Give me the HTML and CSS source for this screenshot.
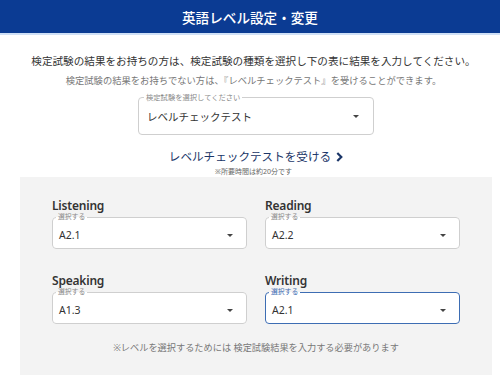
FILE: index.html
```html
<!DOCTYPE html>
<html lang="ja">
<head>
  <meta charset="UTF-8">
  <title>英語レベル設定・変更</title>
  <link rel="stylesheet" href="styles.css">
</head>
<body>
  <header class="top-bar">
    <h1>英語レベル設定・変更</h1>
  </header>

  <section class="intro">
    <p class="lead">検定試験の結果をお持ちの方は、検定試験の種類を選択し下の表に結果を入力してください。</p>
    <p class="sub">検定試験の結果をお持ちでない方は、『レベルチェックテスト』を受けることができます。</p>

    <fieldset class="field field-exam">
      <legend>検定試験を選択してください</legend>
      <div class="value">
        <span>レベルチェックテスト</span>
        <svg class="caret" width="6" height="3" viewBox="0 0 6 3"><path d="M0 0h6L3 3z" fill="#444"/></svg>
      </div>
    </fieldset>

    <a class="test-link" href="#">レベルチェックテストを受ける
      <svg width="7" height="10" viewBox="0 0 7 10"><path d="M1.3 1l4 4-4 4" fill="none" stroke="#1b3668" stroke-width="2.2"/></svg>
    </a>
    <p class="time-note">※所要時間は約20分です</p>
  </section>

  <section class="levels">
    <div class="level-grid">
      <div class="level">
        <h3>Listening</h3>
        <fieldset class="field">
          <legend>選択する</legend>
          <div class="value">
            <span>A2.1</span>
            <svg class="caret" width="6" height="3" viewBox="0 0 6 3"><path d="M0 0h6L3 3z" fill="#444"/></svg>
          </div>
        </fieldset>
      </div>
      <div class="level">
        <h3>Reading</h3>
        <fieldset class="field">
          <legend>選択する</legend>
          <div class="value">
            <span>A2.2</span>
            <svg class="caret" width="6" height="3" viewBox="0 0 6 3"><path d="M0 0h6L3 3z" fill="#444"/></svg>
          </div>
        </fieldset>
      </div>
      <div class="level">
        <h3>Speaking</h3>
        <fieldset class="field">
          <legend>選択する</legend>
          <div class="value">
            <span>A1.3</span>
            <svg class="caret" width="6" height="3" viewBox="0 0 6 3"><path d="M0 0h6L3 3z" fill="#444"/></svg>
          </div>
        </fieldset>
      </div>
      <div class="level">
        <h3>Writing</h3>
        <fieldset class="field focused">
          <legend>選択する</legend>
          <div class="value">
            <span>A2.1</span>
            <svg class="caret" width="6" height="3" viewBox="0 0 6 3"><path d="M0 0h6L3 3z" fill="#444"/></svg>
          </div>
        </fieldset>
      </div>
    </div>
    <p class="levels-note">※レベルを選択するためには 検定試験結果を入力する必要があります</p>
  </section>
</body>
</html>
```

FILE: styles.css
```css
body {
  margin: 0;
  font-family: "Noto Sans", "Noto Sans CJK JP", sans-serif;
  color: #333;
  background: #fff;
}

.top-bar {
  background: #0b3b93;
  height: 33px;
  border-bottom: 2px solid #cfe0f6;
  display: flex;
  align-items: center;
  justify-content: center;
}

.top-bar h1 {
  margin: 0;
  color: #fff;
  font-size: 13.6px;
  font-weight: 500;
}

.intro {
  text-align: center;
  padding: 19px 0 0 7px;
}

.intro p {
  margin: 0;
}

.lead {
  font-size: 10.6px;
  line-height: 14px;
  color: #333;
}

.sub {
  margin-top: 7px !important;
  font-size: 9.3px;
  line-height: 12px;
  color: #777;
}

.field {
  margin: 0;
  border: 1px solid #cfcfcf;
  border-radius: 4px;
  background: #fff;
  text-align: left;
  padding: 7.5px 13px 6.5px 6px;
}

.field legend {
  margin-left: -3px;
  padding: 0 2px;
  font-size: 6.8px;
  line-height: 8px;
  color: #8a8a8a;
}

.field .value {
  display: flex;
  align-items: center;
  justify-content: space-between;
  font-size: 10.5px;
  line-height: 13px;
  color: #333;
}

.field-exam {
  width: 236px;
  box-sizing: border-box;
  margin: 6px 0 0 131px;
  padding: 7.5px 14px 10px 8px;
}

.field-exam legend {
  font-size: 7.3px;
  line-height: 9px;
}

.field-exam .value {
  font-size: 10.5px;
  line-height: 14px;
}

.test-link {
  display: inline-flex;
  align-items: center;
  gap: 5px;
  margin-top: 15px;
  margin-left: 5px;
  font-size: 11.6px;
  line-height: 14px;
  color: #1b3668;
  text-decoration: none;
}

.time-note {
  font-size: 7px;
  line-height: 9px;
  color: #666;
  margin-top: 1px !important;
}

.levels {
  background: #f3f3f3;
  margin: 1.5px 8px 0 20px;
  padding: 22px 32px 21px;
}

.level-grid {
  display: grid;
  grid-template-columns: 195px 195px;
  column-gap: 18px;
  row-gap: 25px;
}

.level h3 {
  margin: 0 0 1px;
  font-size: 12px;
  line-height: 13px;
  font-weight: 600;
  letter-spacing: -0.2px;
  color: #333;
}

.field.focused {
  border: 1.5px solid #3d6db3;
}

.field.focused legend {
  color: #3d6db3;
}

.levels-note {
  margin: 18px 0 0;
  text-align: center;
  font-size: 9.2px;
  line-height: 12px;
  color: #777;
}
```
